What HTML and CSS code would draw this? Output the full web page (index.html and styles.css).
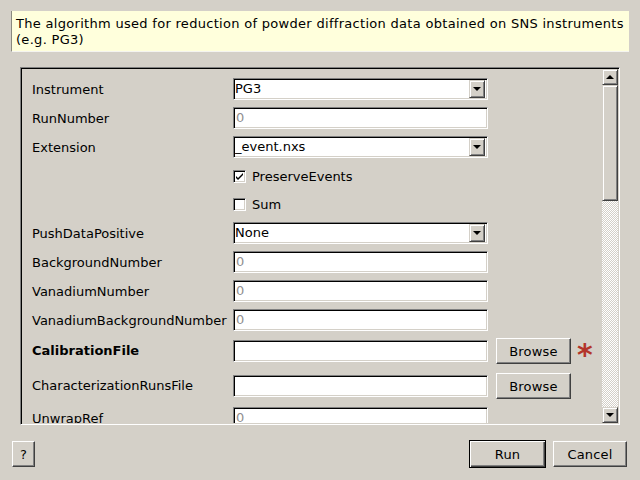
FILE: index.html
```html
<!DOCTYPE html>
<html>
<head>
<meta charset="utf-8">
<link rel="stylesheet" href="styles.css">
</head>
<body>
<div class="dialog">
  <div class="tip">The algorithm used for reduction of powder diffraction data obtained on SNS instruments (e.g. PG3)</div>

  <div class="frame">
    <div class="content">
      <div class="form">
        <div class="label">Instrument</div>
        <div class="combo"><span class="combo-text">PG3</span><span class="combo-btn"><span class="arrow-down"></span></span></div>

        <div class="label">RunNumber</div>
        <div class="edit"><span class="ph">0</span></div>

        <div class="label">Extension</div>
        <div class="combo"><span class="combo-text">_event.nxs</span><span class="combo-btn"><span class="arrow-down"></span></span></div>

        <div class="label"></div>
        <div class="check-row"><span class="checkbox"><svg width="9" height="9" viewBox="0 0 9 9"><path d="M1 4 L3 6 L8 1 L8 3 L3 8 L1 6 Z" fill="#000"/></svg></span><span>PreserveEvents</span></div>

        <div class="label"></div>
        <div class="check-row"><span class="checkbox"></span><span>Sum</span></div>

        <div class="label">PushDataPositive</div>
        <div class="combo"><span class="combo-text">None</span><span class="combo-btn"><span class="arrow-down"></span></span></div>

        <div class="label">BackgroundNumber</div>
        <div class="edit"><span class="ph">0</span></div>

        <div class="label">VanadiumNumber</div>
        <div class="edit"><span class="ph">0</span></div>

        <div class="label">VanadiumBackgroundNumber</div>
        <div class="edit"><span class="ph">0</span></div>

        <div class="label bold file-label">CalibrationFile</div>
        <div class="file-row"><div class="edit"></div><button class="btn browse">Browse</button><span class="star">*</span></div>

        <div class="label file-label">CharacterizationRunsFile</div>
        <div class="file-row"><div class="edit"></div><button class="btn browse">Browse</button></div>

        <div class="label">UnwrapRef</div>
        <div class="edit"><span class="ph">0</span></div>
      </div>
    </div>
    <div class="scrollbar">
      <div class="sb-btn"><span class="arrow-up"></span></div>
      <div class="sb-handle"></div>
      <div class="sb-track"></div>
      <div class="sb-btn"><span class="arrow-down"></span></div>
    </div>
  </div>

  <div class="buttons">
    <button class="btn help">?</button>
    <div class="spacer"></div>
    <button class="btn run">Run</button>
    <button class="btn cancel">Cancel</button>
  </div>
</div>
</body>
</html>
```

FILE: styles.css
```css
html, body {
  margin: 0;
  padding: 0;
  width: 640px;
  height: 480px;
  overflow: hidden;
  background: #d4d0c8;
}

.dialog {
  font-family: "DejaVu Sans", "Bitstream Vera Sans", sans-serif;
  font-size: 13px;
  color: #000;
  width: 640px;
  height: 480px;
  display: flex;
  flex-direction: column;
}

.tip {
  box-sizing: border-box;
  margin: 11px 11px 0 11px;
  height: 41px;
  padding: 5px 2px 0 4px;
  background: #ffffdc;
  border-left: 1px solid #8a8a80;
  border-bottom: 1px solid #f4f4f0;
  line-height: 16px;
  letter-spacing: 0.3px;
}

.frame {
  box-sizing: border-box;
  margin: 15px 0 0 20px;
  width: 600px;
  height: 358px;
  border: 1px solid;
  border-color: #808080 #ffffff #ffffff #808080;
  box-shadow: inset 1px 1px 0 #000, inset -1px -1px 0 #d4d0c8;
  padding: 1px;
  display: flex;
}

.content {
  flex: 1;
  overflow: hidden;
  padding: 9px 0 0 10px;
}

.form {
  display: grid;
  grid-template-columns: 201px auto;
  grid-template-rows: 22px 22px 22px 22px 21px 22px 22px 22px 22px 28px 27px 22px;
  row-gap: 7px;
  align-items: center;
}

.label {
  white-space: nowrap;
}

.file-label {
  align-self: start;
  line-height: 26px;
}

.bold {
  font-weight: bold;
}

.edit, .combo {
  box-sizing: border-box;
  width: 255px;
  height: 22px;
  background: #fff;
  border: 1px solid;
  border-color: #808080 #ffffff #ffffff #808080;
  box-shadow: inset 1px 1px 0 #000, inset -1px -1px 0 #d4d0c8;
  padding: 0 2px 0 2px;
  line-height: 20px;
  white-space: nowrap;
}

.ph {
  color: #909090;
}

.combo {
  display: flex;
  padding: 0 2px 0 1px;
}

.combo-text {
  flex: 1;
}

.combo-btn {
  box-sizing: border-box;
  width: 16px;
  height: 18px;
  margin-top: 1px;
  background: #d4d0c8;
  border: 1px solid;
  border-color: #d4d0c8 #404040 #404040 #d4d0c8;
  box-shadow: inset 1px 1px 0 #fff, inset -1px -1px 0 #808080;
  display: flex;
  align-items: center;
  justify-content: center;
}

.arrow-down {
  width: 0;
  height: 0;
  border-left: 4px solid transparent;
  border-right: 4px solid transparent;
  border-top: 4px solid #000;
}

.arrow-up {
  width: 0;
  height: 0;
  border-left: 4px solid transparent;
  border-right: 4px solid transparent;
  border-bottom: 4px solid #000;
}

.check-row {
  display: flex;
  align-items: center;
  gap: 6px;
}

.checkbox {
  box-sizing: border-box;
  width: 13px;
  height: 13px;
  background: #fff;
  border: 1px solid;
  border-color: #808080 #ffffff #ffffff #808080;
  box-shadow: inset 1px 1px 0 #000, inset -1px -1px 0 #d4d0c8;
  display: flex;
  align-items: center;
  justify-content: center;
}

.checkbox svg {
  display: block;
}

.file-row {
  align-self: start;
  height: 26px;
  display: flex;
  align-items: center;
}

.btn {
  box-sizing: border-box;
  font-family: "DejaVu Sans", "Bitstream Vera Sans", sans-serif;
  font-size: 13px;
  letter-spacing: 0.2px;
  color: #000;
  background: #d4d0c8;
  border: 1px solid;
  border-color: #ffffff #404040 #404040 #ffffff;
  box-shadow: inset -1px -1px 0 #808080;
  padding: 0;
  margin: 0;
  height: 26px;
  text-align: center;
}

.browse {
  width: 75px;
  margin-left: 8px;
}

.star {
  font-family: "DejaVu Sans", sans-serif;
  font-weight: bold;
  font-size: 30px;
  color: #b3342a;
  line-height: 22px;
  height: 22px;
  margin-left: 6px;
  padding-top: 8px;
}

.scrollbar {
  width: 16px;
  display: flex;
  flex-direction: column;
}

.sb-btn {
  box-sizing: border-box;
  width: 16px;
  height: 16px;
  background: #d4d0c8;
  border: 1px solid;
  border-color: #d4d0c8 #404040 #404040 #d4d0c8;
  box-shadow: inset 1px 1px 0 #fff, inset -1px -1px 0 #808080;
  display: flex;
  align-items: center;
  justify-content: center;
}

.sb-handle {
  box-sizing: border-box;
  height: 116px;
  background: #d4d0c8;
  border: 1px solid;
  border-color: #d4d0c8 #404040 #404040 #d4d0c8;
  box-shadow: inset 1px 1px 0 #fff, inset -1px -1px 0 #808080;
}

.sb-track {
  flex: 1;
  background: repeating-conic-gradient(#ffffff 0 25%, #d4d0c8 0 50%) 0 0 / 2px 2px;
}

.buttons {
  display: flex;
  align-items: center;
  margin-top: 15px;
  padding: 0 13px 0 12px;
  gap: 7px;
}

.spacer {
  flex: 1;
}

.help {
  width: 23px;
}

.run {
  width: 77px;
  height: 28px;
  border: 1px solid #000;
  box-shadow: inset 1px 1px 0 #fff, inset -1px -1px 0 #404040, inset -2px -2px 0 #808080;
}

.cancel {
  width: 74px;
}
```
